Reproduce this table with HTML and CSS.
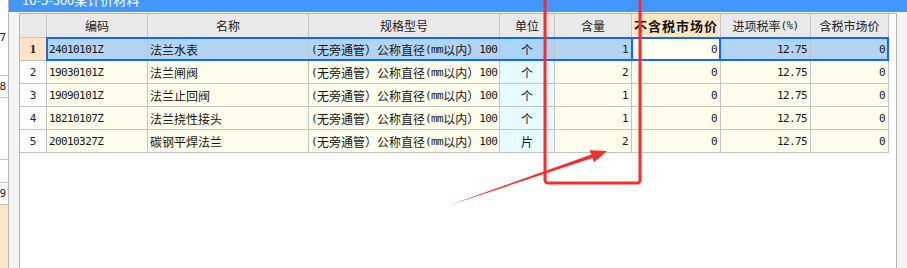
FILE: index.html
```html
<!DOCTYPE html>
<html lang="zh-CN">

<head>
    <meta charset="UTF-8">
    <meta name="viewport" content="width=device-width, initial-scale=1.0">
    <title>材料价格</title>
    <link rel="stylesheet" href="styles.css">
</head>

<body>
    <div class="screen">

        <!-- row ruler of the list behind the window -->
        <div class="rail">
            <div class="rail-cell r1">7</div>
            <div class="rail-cell r2">8</div>
            <div class="rail-cell r3"></div>
            <div class="rail-cell r4"></div>
            <div class="rail-cell r5">9</div>
            <div class="rail-fill"></div>
        </div>

        <div class="panel">
            <div class="title"><span>10-5-300某计价材料</span></div>

            <div class="well">
                <div class="grid">
                    <div class="table">
                        <div class="row head">
                            <div class="corner"></div>
                            <div>编码</div>
                            <div>名称</div>
                            <div>规格型号</div>
                            <div>单位</div>
                            <div>含量</div>
                            <div class="focus">不含税市场价</div>
                            <div>进项税率<span class="a">(%)</span></div>
                            <div>含税市场价</div>
                        </div>

                        <div class="row active">
                            <div class="rn">1</div>
                            <div class="code">24010101Z</div>
                            <div class="name">法兰水表</div>
                            <div class="spec"><span class="a">(</span>无旁通管）公称直径<span class="a">(mm</span>以内）<span class="a">100</span></div>
                            <div class="unit">个</div>
                            <div class="num">1</div>
                            <div class="num cur">0</div>
                            <div class="num">12.75</div>
                            <div class="num">0</div>
                        </div>

                        <div class="row">
                            <div class="rn">2</div>
                            <div class="code">19030101Z</div>
                            <div class="name">法兰闸阀</div>
                            <div class="spec"><span class="a">(</span>无旁通管）公称直径<span class="a">(mm</span>以内）<span class="a">100</span></div>
                            <div class="unit">个</div>
                            <div class="num">2</div>
                            <div class="num">0</div>
                            <div class="num">12.75</div>
                            <div class="num">0</div>
                        </div>

                        <div class="row">
                            <div class="rn">3</div>
                            <div class="code">19090101Z</div>
                            <div class="name">法兰止回阀</div>
                            <div class="spec"><span class="a">(</span>无旁通管）公称直径<span class="a">(mm</span>以内）<span class="a">100</span></div>
                            <div class="unit">个</div>
                            <div class="num">1</div>
                            <div class="num">0</div>
                            <div class="num">12.75</div>
                            <div class="num">0</div>
                        </div>

                        <div class="row">
                            <div class="rn">4</div>
                            <div class="code">18210107Z</div>
                            <div class="name">法兰挠性接头</div>
                            <div class="spec"><span class="a">(</span>无旁通管）公称直径<span class="a">(mm</span>以内）<span class="a">100</span></div>
                            <div class="unit">个</div>
                            <div class="num">1</div>
                            <div class="num">0</div>
                            <div class="num">12.75</div>
                            <div class="num">0</div>
                        </div>

                        <div class="row">
                            <div class="rn">5</div>
                            <div class="code">20010327Z</div>
                            <div class="name">碳钢平焊法兰</div>
                            <div class="spec"><span class="a">(</span>无旁通管）公称直径<span class="a">(mm</span>以内）<span class="a">100</span></div>
                            <div class="unit">片</div>
                            <div class="num">2</div>
                            <div class="num">0</div>
                            <div class="num">12.75</div>
                            <div class="num">0</div>
                        </div>
                    </div>
                </div>
            </div>
        </div>

        <!-- red markup drawn on top: box round the column and an arrow -->
        <svg class="marks" width="907" height="268" viewBox="0 0 907 268">
            <rect x="545" y="-10" width="95" height="193" rx="3" fill="none" stroke="#fb2b2b" stroke-width="3" />
            <polygon points="447,206 592.5,157.9 594,162.2 607,151 589.6,150.3 591.3,154.5" fill="#fb2b2b" />
        </svg>
    </div>
</body>

</html>
```

FILE: styles.css
```css
body {
    margin: 0;
    padding: 0;
    background-color: #fff;
    font-family: "Noto Sans CJK SC", sans-serif;
    font-size: 12px;
    color: #161616;
}

.screen {
    position: relative;
    display: flex;
    width: 907px;
    height: 268px;
    overflow: hidden;
}

/* left ruler */
.rail {
    width: 8px;
    border-right: 1px solid #b4b4b4;
    display: flex;
    flex-direction: column;
}

.rail-cell {
    display: flex;
    align-items: center;
    justify-content: flex-end;
    padding-right: 2px;
    border-bottom: 1px solid #c4c4c4;
    font-family: "DejaVu Sans Mono", monospace;
    font-size: 11px;
    color: #222;
}

.r1 { height: 75px; }
.r2 { height: 21px; }
.r3 { height: 61px; }
.r4 { height: 22px; }
.r5 { height: 21px; }

.rail-fill {
    flex: 1;
    background-color: #fde7c9;
}

/* window */
.panel {
    flex: 1;
    display: flex;
    flex-direction: column;
}

.title {
    height: 12px;
    padding-left: 13px;
    background-color: #4297fd;
    color: #fff;
    overflow: hidden;
}

.title span {
    display: block;
    margin-top: -7px;
    font-size: 13px;
    line-height: 14px;
}

.well {
    flex: 1;
    display: flex;
    padding: 1px 10px 0;
    background-color: #f4f4f4;
}

.grid {
    flex: 1;
    background-color: #fff;
    border: 1px solid #b6b6b6;
    border-bottom: none;
}

/* price table */
.table {
    width: 868px;
    display: flex;
    flex-direction: column;
    gap: 1px;
    background-color: #c4c4c4;
    border-right: 1px solid #c4c4c4;
    border-bottom: 1px solid #c4c4c4;
}

.row {
    display: grid;
    grid-template-columns: 26px 100px 160px 190px 54px 76px 88px 89px 77px;
    gap: 1px;
    height: 22px;
}

.row > div {
    display: flex;
    align-items: center;
    padding: 0 3px;
    white-space: nowrap;
    overflow: hidden;
    background-color: #fffeec;
}

.row.head {
    height: 23px;
}

.row.head > div {
    justify-content: center;
    background-color: #e9e9e9;
    color: #222;
}

.row.head > .focus {
    background-color: #fde5c8;
    font-weight: bold;
    font-size: 13px;
    letter-spacing: 1px;
    color: #111;
}

.a {
    font-family: "DejaVu Sans Mono", monospace;
    font-size: 11px;
    letter-spacing: -0.6px;
}

.row > .rn {
    justify-content: center;
    background-color: #fff;
    font-family: "DejaVu Sans Mono", monospace;
    font-size: 11px;
    color: #222;
}

.row > .code {
    padding-left: 2px;
    font-family: "DejaVu Sans Mono", monospace;
    font-size: 11px;
    letter-spacing: -0.6px;
}

.row > .name {
    padding-left: 2px;
}

.row > .spec {
    padding: 0 0 0 2px;
}

.row > .unit {
    justify-content: center;
    background-color: #e6fbff;
}

.row > .num {
    justify-content: flex-end;
    font-family: "DejaVu Sans Mono", monospace;
    font-size: 11px;
    letter-spacing: -0.6px;
}

/* selected row */
.row.active {
    position: relative;
}

.row.active::after {
    content: "";
    position: absolute;
    left: 26px;
    right: -1px;
    top: -1px;
    bottom: -1px;
    border: 2px solid #1468f0;
    pointer-events: none;
}

.row.active > div {
    background-color: #b3d4f1;
}

.row.active > .rn {
    background-color: #fde4c6;
    font-family: "Liberation Serif", serif;
    font-weight: bold;
    font-size: 13px;
}

.row.active > .unit {
    background-color: #a9d5fb;
}

.row.active > .cur {
    background-color: #fffff2;
    outline: 2px solid #1468f0;
    outline-offset: -1px;
}

.marks {
    position: absolute;
    top: 0;
    left: 0;
    pointer-events: none;
}
```
